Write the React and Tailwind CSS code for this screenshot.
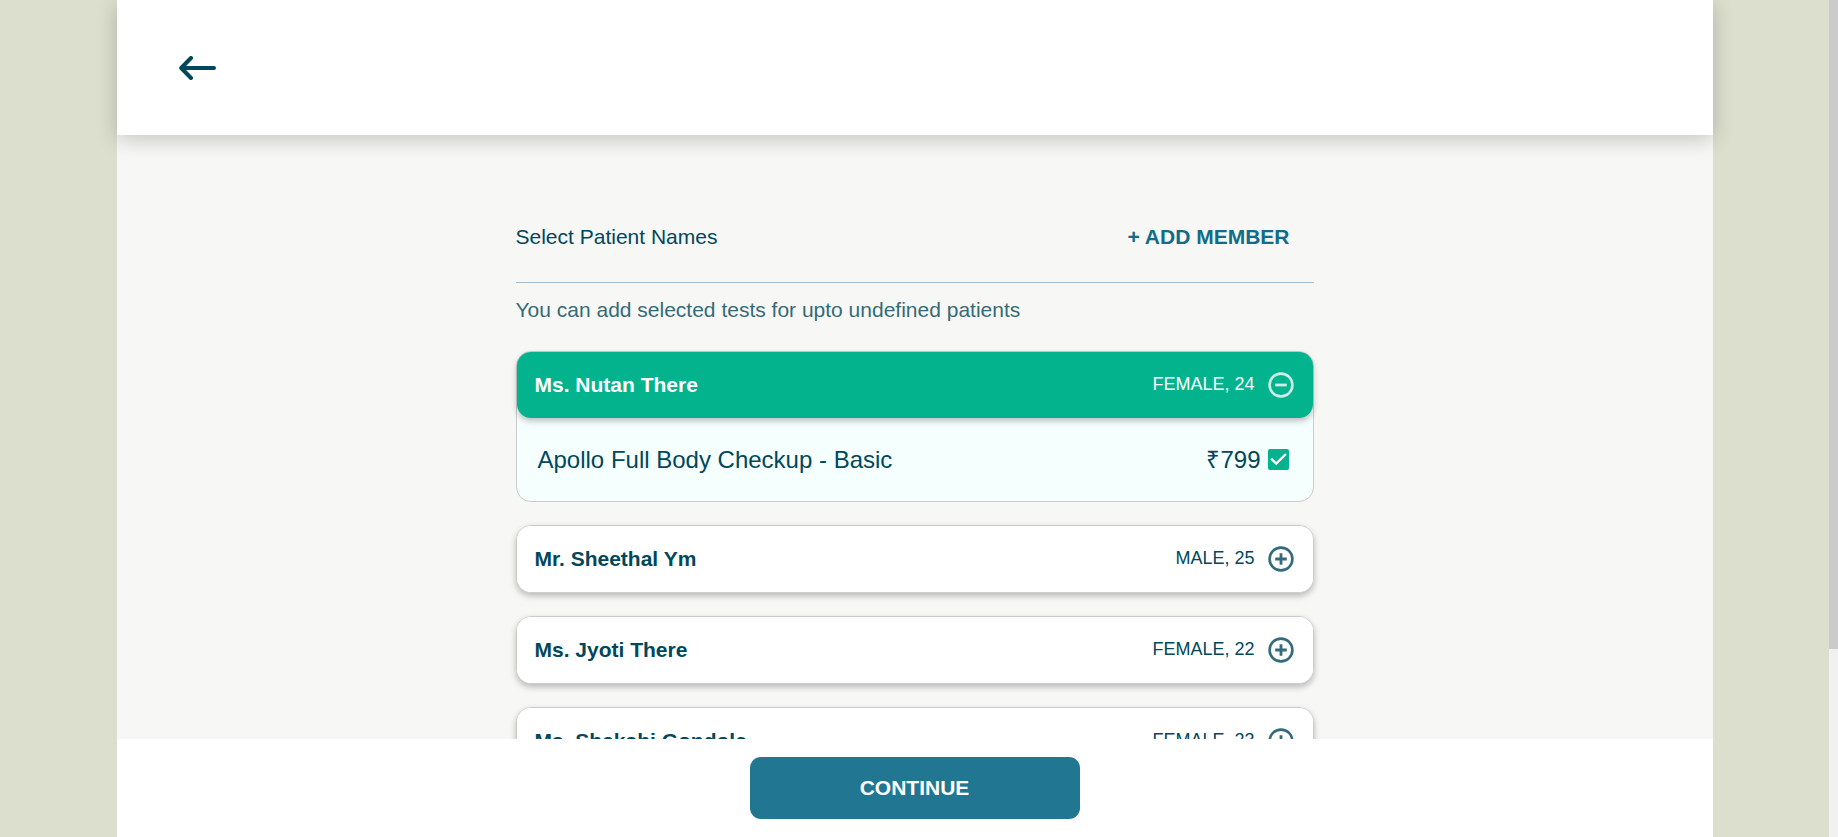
import { useState } from "react";

const patients = [
  { name: "Ms. Nutan There", meta: "FEMALE, 24" },
  { name: "Mr. Sheethal Ym", meta: "MALE, 25" },
  { name: "Ms. Jyoti There", meta: "FEMALE, 22" },
  { name: "Ms. Shakshi Gondole", meta: "FEMALE, 23" },
];

function ToggleIcon({ open }) {
  return (
    <svg viewBox="0 0 26 26" className="size-[26px] shrink-0 opacity-80" fill="none" stroke="currentColor" aria-hidden="true">
      <circle cx="13" cy="13" r="11.4" strokeWidth="2.6" />
      <path d={open ? "M7.2 13h11.6" : "M7.2 13h11.6M13 7.2v11.6"} strokeWidth="2.8" />
    </svg>
  );
}

function PatientCard({ patient, open, onToggle }) {
  return (
    <li
      className={
        "rounded-[15px] border border-[#cbcdcd] " +
        (open ? "bg-[#f5fffe]" : "bg-white shadow-[0_3px_6px_rgba(0,0,0,0.25)]")
      }
    >
      <button
        type="button"
        aria-expanded={open}
        onClick={onToggle}
        className={
          "flex h-[66px] w-full items-center rounded-[14px] pr-[19px] pl-[18px] text-left " +
          (open ? "bg-[#02b38e] text-white shadow-[0_3px_6px_rgba(0,0,0,0.25)]" : "bg-white text-[#02475b]")
        }
      >
        <span className="flex-1 truncate text-[21px] leading-6 font-bold">{patient.name}</span>
        <span className="mr-[13px] pb-0.5 text-[18px] leading-6">{patient.meta}</span>
        <ToggleIcon open={open} />
      </button>
      {open && (
        <label className="flex h-[83px] items-center pr-6 pl-[21px] text-[24px] leading-8 text-[#02475b]">
          <span className="flex-1">Apollo Full Body Checkup - Basic</span>
          <span className="mr-[7px]">₹799</span>
          <span className="grid">
            <input
              type="checkbox"
              defaultChecked
              className="peer col-start-1 row-start-1 size-[21px] appearance-none rounded-[2px] border-2 border-[#02b38e] checked:bg-[#02b38e]"
            />
            <svg viewBox="3 3 18 18" className="pointer-events-none col-start-1 row-start-1 hidden size-[21px] peer-checked:block" fill="#fff" aria-hidden="true">
              <path d="M10 17l-5-5 1.41-1.41L10 14.17l7.59-7.59L19 8z" />
            </svg>
          </span>
        </label>
      )}
    </li>
  );
}

export default function App() {
  const [openIndex, setOpenIndex] = useState(0);
  return (
    <div className="flex h-screen bg-[#dcdfce] font-['Liberation_Sans',Arial,sans-serif] text-[#02475b]">
      <div className="flex min-w-0 flex-1 justify-center">
        <div className="flex h-full w-full max-w-[1596px] flex-col bg-[#f7f8f5]">
          <header className="z-10 flex h-[135px] shrink-0 items-center bg-white px-[62px] shadow-[0_5px_20px_rgba(0,0,0,0.2)]">
            <a href="#back" aria-label="Back">
              <svg viewBox="0 0 38 24" className="h-6 w-[38px]" fill="none" stroke="#02475b" strokeWidth="4" strokeLinecap="round" strokeLinejoin="round" aria-hidden="true">
                <path d="M35 12H2.2M12 2L2.2 12 12 22" />
              </svg>
            </a>
          </header>
          <main className="min-h-0 flex-1 overflow-hidden">
            <div className="mx-auto w-1/2 pt-[80px]">
              <div className="flex h-[68px] items-start justify-between border-b border-[#a7bcca] pt-[10px] pr-6">
                <h1 className="text-[21px] leading-6">Select Patient Names</h1>
                <button type="button" className="text-[21px] leading-6 font-bold text-[#106c89]">+ ADD MEMBER</button>
              </div>
              <p className="mt-[15px] mb-[29px] text-[21px] leading-6 opacity-80">
                You can add selected tests for upto undefined patients
              </p>
              <ul className="flex flex-col gap-[23px]">
                {patients.map((p, i) => (
                  <PatientCard
                    key={p.name}
                    patient={p}
                    open={openIndex === i}
                    onToggle={() => setOpenIndex(openIndex === i ? -1 : i)}
                  />
                ))}
              </ul>
            </div>
          </main>
          <footer className="flex shrink-0 justify-center bg-white py-[18px]">
            <button type="button" className="h-[62px] w-[330px] rounded-[11px] bg-[#217691] text-[21px] leading-6 font-bold text-white">
              CONTINUE
            </button>
          </footer>
        </div>
      </div>
      <div className="w-[9px] shrink-0 bg-[#f1f1f1]" aria-hidden="true">
        <div className="h-[77.5%] bg-[#cbcbcb]" />
      </div>
    </div>
  );
}
